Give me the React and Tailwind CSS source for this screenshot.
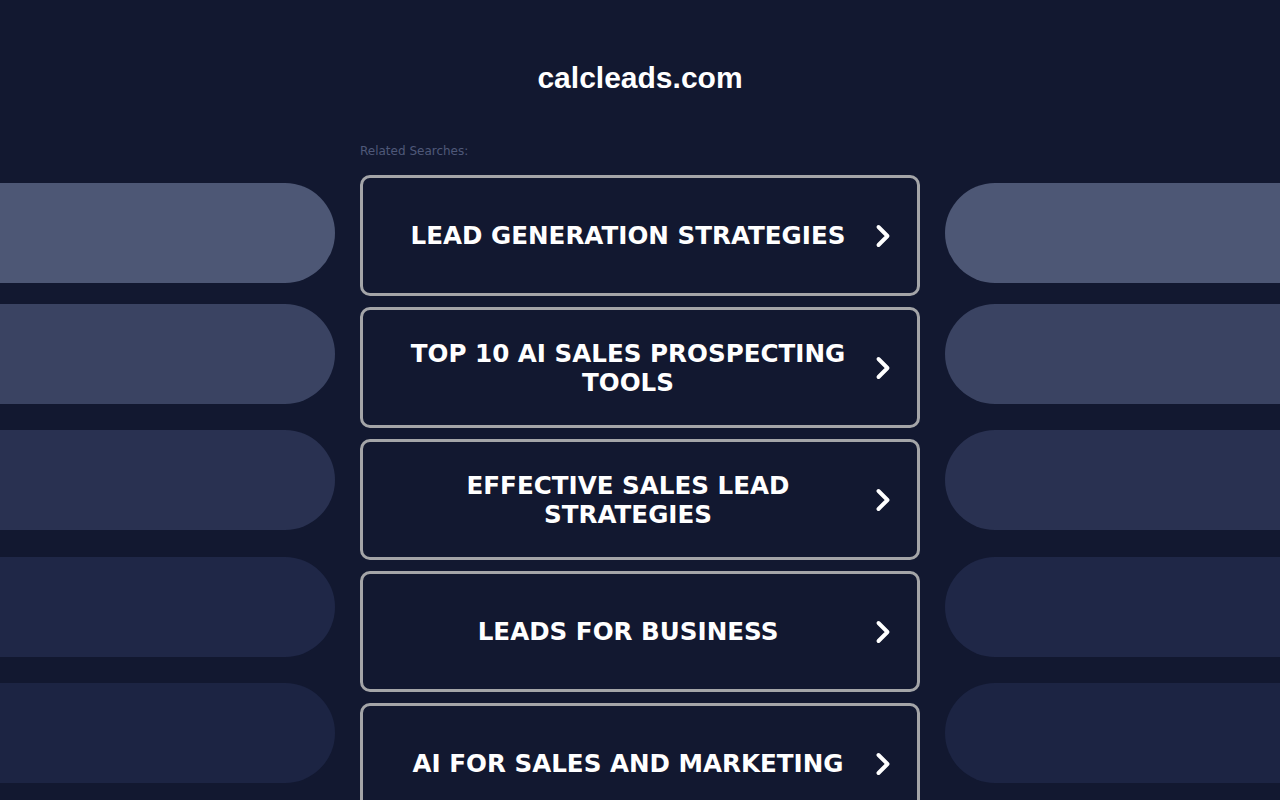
import { ChevronRight } from "lucide-react";

const searches = [
  "LEAD GENERATION STRATEGIES",
  "TOP 10 AI SALES PROSPECTING TOOLS",
  "EFFECTIVE SALES LEAD STRATEGIES",
  "LEADS FOR BUSINESS",
  "AI FOR SALES AND MARKETING",
];

const pills = [
  { color: "bg-[#4d5775]", mt: "mt-0" },
  { color: "bg-[#3a4362]", mt: "mt-[21px]" },
  { color: "bg-[#293151]", mt: "mt-[26px]" },
  { color: "bg-[#1f2747]", mt: "mt-[27px]" },
  { color: "bg-[#1c2443]", mt: "mt-[26px]" },
];

function Pills({ side }) {
  return (
    <div className="w-[335px] shrink-0 pt-[183px] flex flex-col">
      {pills.map((p, i) => (
        <div
          key={i}
          className={`h-[100px] ${p.mt} ${p.color} ${side === "left" ? "rounded-r-[50px]" : "rounded-l-[50px]"}`}
        />
      ))}
    </div>
  );
}

export default function App() {
  return (
    <div className="bg-[#121830] h-[800px] overflow-hidden flex justify-between font-['Liberation_Sans',Arial,sans-serif]">
      <Pills side="left" />

      <main className="w-[560px] shrink-0 flex flex-col">
        <h1 className="text-center text-white font-bold text-[30px] leading-none pt-[63px]">calcleads.com</h1>
        <p className="mt-[52px] text-[12px] leading-none font-['DejaVu_Sans',Verdana,sans-serif] text-[#4f5879]">Related Searches:</p>
        <div className="mt-[18px] flex flex-col gap-[11px]">
          {searches.map((s) => (
            <a
              key={s}
              href="#"
              className="h-[121px] border-[3px] border-[#a4a5a8] rounded-[10px] flex items-center pl-[38px] pr-[16px] no-underline"
            >
              <span className="flex-1 text-center text-white font-bold text-[24.6px] leading-[29px] font-['DejaVu_Sans',Verdana,sans-serif]">
                {s}
              </span>
              <ChevronRight className="w-[36px] h-[36px] text-white ml-[10px] shrink-0" strokeWidth={2.6} />
            </a>
          ))}
        </div>
      </main>

      <Pills side="right" />
    </div>
  );
}
